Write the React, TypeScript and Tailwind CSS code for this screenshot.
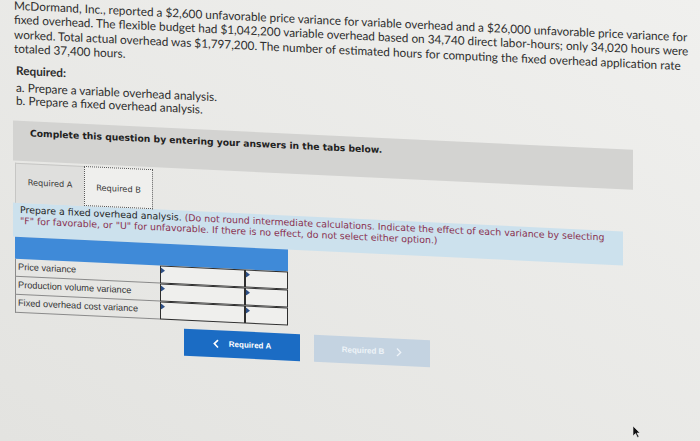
import React from 'react'

const rows = ['Price variance', 'Production volume variance', 'Fixed overhead cost variance']

const InputCell: React.FC<{ wide?: boolean }> = ({ wide }) => (
    <div className={`relative h-[18px] border border-[#2e2e2e] bg-[#efefed] ${wide ? 'w-[85px]' : 'w-[43px]'}`}>
        <svg className="absolute left-0 top-[1px]" width="4" height="6" viewBox="0 0 4 6">
            <polygon points="0,0 4,3 0,6" fill="#2d4f86" />
        </svg>
    </div>
)

export default function App() {
    return (
        <div className="relative h-[441px] w-[700px] overflow-hidden bg-linear-to-tr from-[#e3e3e0] to-[#f0f0ee]">
            <div className="origin-top-left skew-y-[2.7deg] pl-[13px]">
                {/* problem text */}
                <div className="-mt-[2.5px] pl-[1px] font-['Lato',sans-serif] text-[11.8px] leading-[14.3px] text-[#2e2e2e] whitespace-nowrap">
                    <div>McDormand, Inc., reported a $2,600 unfavorable price variance for variable overhead and a $26,000 unfavorable price variance for</div>
                    <div>fixed overhead. The flexible budget had $1,042,200 variable overhead based on 34,740 direct labor-hours; only 34,020 hours were</div>
                    <div>worked. Total actual overhead was $1,797,200. The number of estimated hours for computing the fixed overhead application rate</div>
                    <div>totaled 37,400 hours.</div>
                </div>

                <div className="mt-[8px] pl-[3px] font-['Lato',sans-serif] text-[11.8px] text-[#2e2e2e]">
                    <div className="font-bold leading-[14px]">Required:</div>
                    <div className="mt-[3px] leading-[13px]">a. Prepare a variable overhead analysis.</div>
                    <div className="leading-[13px]">b. Prepare a fixed overhead analysis.</div>
                </div>

                {/* gray instruction bar */}
                <div className="mt-[14px] h-[40px] w-[620px] bg-[#d3d3d1] pl-[17px] pt-[6px] font-['DejaVu_Sans',sans-serif] text-[9.2px] font-bold leading-[12px] text-[#222]">
                    Complete this question by entering your answers in the tabs below.
                </div>

                {/* tabs */}
                <div className="mt-[2px] flex h-[40px] pl-[2px] font-['DejaVu_Sans',sans-serif] text-[8.2px] text-[#3a3a3a]">
                    <div className="flex w-[69px] items-center justify-center border-l border-t border-[#c6c6c4] bg-[#dfdfdd] pb-[4px]">
                        Required A
                    </div>
                    <div className="flex w-[69px] items-center justify-center border border-dotted border-[#5a5a5a] bg-[#efefed] pt-[2px]">
                        Required B
                    </div>
                </div>

                {/* blue instructions */}
                <div className="h-[34px] w-[610px] bg-[#cce1ed] pl-[7px] pt-[1px] font-['DejaVu_Sans',sans-serif] text-[9.4px] leading-[11px] whitespace-nowrap">
                    <div>
                        <span className="text-[#262626]">Prepare a fixed overhead analysis. </span>
                        <span className="text-[#8a3150]">(Do not round intermediate calculations. Indicate the effect of each variance by selecting</span>
                    </div>
                    <div className="text-[#8a3150]">"F" for favorable, or "U" for unfavorable. If there is no effect, do not select either option.)</div>
                </div>

                {/* answer table */}
                <div className="ml-[2px] w-[273px] font-['Liberation_Sans',sans-serif] text-[9.2px] text-[#333]">
                    <div className="h-[22px] bg-[#3f8ad8]" />
                    {rows.map((r) => (
                        <div key={r} className="flex">
                            <div className="flex h-[18px] w-[145px] items-center border-b border-l border-[#8a8a8a] pl-[2px]">{r}</div>
                            <InputCell wide />
                            <InputCell />
                        </div>
                    ))}
                </div>

                {/* nav buttons */}
                <div className="ml-[171px] mt-[8px] flex gap-[14px] font-['Liberation_Sans',sans-serif] text-[8px] font-bold">
                    <div className="flex h-[27px] w-[116px] items-center justify-center gap-[10px] bg-[#1b6cc4] text-white">
                        <svg width="6" height="9" viewBox="0 0 6 9" fill="none" stroke="white" strokeWidth="1.6">
                            <polyline points="5,0.8 1.3,4.5 5,8.2" />
                        </svg>
                        <span>Required A</span>
                    </div>
                    <div className="flex h-[27px] w-[116px] items-center justify-center gap-[12px] bg-[#c4d3e1] text-[#eef3f8]">
                        <span>Required B</span>
                        <svg width="6" height="9" viewBox="0 0 6 9" fill="none" stroke="#eef3f8" strokeWidth="1.3">
                            <polyline points="1,0.8 4.7,4.5 1,8.2" />
                        </svg>
                    </div>
                </div>
            </div>

            {/* mouse cursor */}
            <svg className="absolute left-[633px] top-[426px]" width="8" height="12" viewBox="0 0 8 12">
                <polygon points="0,0 0,10 2.5,7.5 4.5,11.5 6,10.8 4,7 7,7" fill="#111" stroke="#eee" strokeWidth="0.6" />
            </svg>
        </div>
    )
}
